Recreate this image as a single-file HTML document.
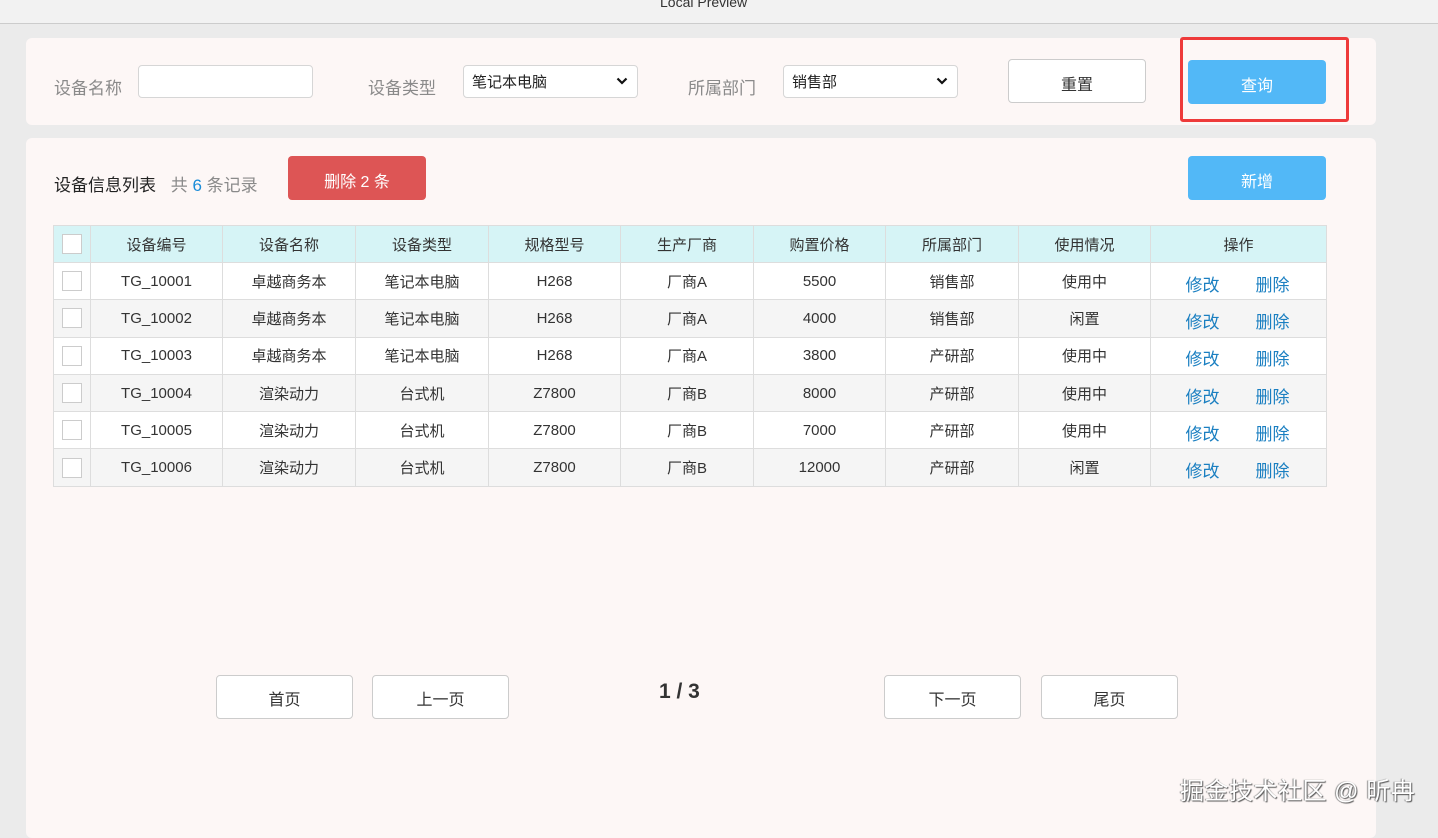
<!DOCTYPE html>
<html><head><meta charset="utf-8"><style>
*{box-sizing:border-box;margin:0;padding:0}
body{width:1438px;height:823px;overflow:hidden;background:#ebebeb;font-family:"Liberation Sans","Noto Sans CJK SC",sans-serif;position:relative;color:#333}
.top{position:absolute;left:0;top:0;width:1438px;height:24px;background:#f2f2f2;border-bottom:1px solid #ccc}
.top span{position:absolute;left:660px;top:-6px;font-size:14px;color:#333}
.card{position:absolute;left:26px;background:#fdf7f6;border-radius:6px;width:1350px}
.lbl{position:absolute;font-size:17px;color:#8a8a8a}
.inp{position:absolute;height:33px;background:#fff;border:1px solid #d6d6d6;border-radius:4px;font-size:15px;color:#222;padding:5px 8px}
.inp svg{position:absolute;right:9px;top:11px}
.btn{position:absolute;border-radius:4px;display:flex;align-items:center;justify-content:center;font-size:16px;padding-top:3px}
table{position:absolute;left:53px;top:225px;border-collapse:collapse;font-size:15px}
td,th{border:1px solid #ddd;height:37.3px;text-align:center;font-weight:normal;color:#333}
th{background:#d6f4f6;height:37px}
tr.g td{background:#f5f5f5}
tr.w td{background:#fff}
.cb{display:inline-block;width:20px;height:20px;border:1px solid #ccc;background:#fff;vertical-align:middle}
a{color:#1a7fc1;text-decoration:none;font-size:17px;margin:0 19px 0 17px;position:relative;top:2px}
.pg{position:absolute;top:675px;width:137px;height:44px;background:#fff;border:1px solid #ccc;border-radius:4px;display:flex;align-items:center;justify-content:center;padding-top:2px;font-size:16px}
</style></head><body>
<div class="top"><span>Local Preview</span></div>
<div class="card" style="top:38px;height:87px"></div>
<div class="lbl" style="left:54px;top:74px">设备名称</div>
<div class="inp" style="left:138px;top:65px;width:175px"></div>
<div class="lbl" style="left:368px;top:74px">设备类型</div>
<div class="inp" style="left:463px;top:65px;width:175px">笔记本电脑<svg width="12" height="8" viewBox="0 0 12 8"><path d="M1.5 1.5L6 6L10.5 1.5" fill="none" stroke="#111" stroke-width="2.2"/></svg></div>
<div class="lbl" style="left:688px;top:74px">所属部门</div>
<div class="inp" style="left:783px;top:65px;width:175px">销售部<svg width="12" height="8" viewBox="0 0 12 8"><path d="M1.5 1.5L6 6L10.5 1.5" fill="none" stroke="#111" stroke-width="2.2"/></svg></div>
<div class="btn" style="left:1008px;top:59px;width:138px;height:44px;background:#fff;border:1px solid #ccc">重置</div>
<div class="btn" style="left:1188px;top:60px;width:138px;height:44px;background:#52b8f7;color:#fff">查询</div>
<div style="position:absolute;left:1180px;top:37px;width:169px;height:85px;border:3px solid #ee3a3a;border-radius:3px"></div>
<div class="card" style="top:138px;height:700px"></div>
<div style="position:absolute;left:54px;top:171px;font-size:17px;color:#222">设备信息列表 <span style="color:#8a8a8a;margin-left:10px">共 <span style="color:#1a8cd8">6</span> 条记录</span></div>
<div class="btn" style="left:288px;top:156px;width:138px;height:44px;background:#dd5555;color:#fff">删除 2 条</div>
<div class="btn" style="left:1188px;top:156px;width:138px;height:44px;background:#52b8f7;color:#fff">新增</div>
<table>
<tr><th style="width:37px"><span class="cb"></span></th><th style="width:132px">设备编号</th><th style="width:133px">设备名称</th><th style="width:133px">设备类型</th><th style="width:132px">规格型号</th><th style="width:133px">生产厂商</th><th style="width:132px">购置价格</th><th style="width:133px">所属部门</th><th style="width:132px">使用情况</th><th style="width:176px">操作</th></tr>
<tr class="w"><td><span class="cb"></span></td><td>TG_10001</td><td>卓越商务本</td><td>笔记本电脑</td><td>H268</td><td>厂商A</td><td>5500</td><td>销售部</td><td>使用中</td><td><a>修改</a><a>删除</a></td></tr>
<tr class="g"><td><span class="cb"></span></td><td>TG_10002</td><td>卓越商务本</td><td>笔记本电脑</td><td>H268</td><td>厂商A</td><td>4000</td><td>销售部</td><td>闲置</td><td><a>修改</a><a>删除</a></td></tr>
<tr class="w"><td><span class="cb"></span></td><td>TG_10003</td><td>卓越商务本</td><td>笔记本电脑</td><td>H268</td><td>厂商A</td><td>3800</td><td>产研部</td><td>使用中</td><td><a>修改</a><a>删除</a></td></tr>
<tr class="g"><td><span class="cb"></span></td><td>TG_10004</td><td>渲染动力</td><td>台式机</td><td>Z7800</td><td>厂商B</td><td>8000</td><td>产研部</td><td>使用中</td><td><a>修改</a><a>删除</a></td></tr>
<tr class="w"><td><span class="cb"></span></td><td>TG_10005</td><td>渲染动力</td><td>台式机</td><td>Z7800</td><td>厂商B</td><td>7000</td><td>产研部</td><td>使用中</td><td><a>修改</a><a>删除</a></td></tr>
<tr class="g"><td><span class="cb"></span></td><td>TG_10006</td><td>渲染动力</td><td>台式机</td><td>Z7800</td><td>厂商B</td><td>12000</td><td>产研部</td><td>闲置</td><td><a>修改</a><a>删除</a></td></tr>
</table>
<div class="pg" style="left:216px">首页</div>
<div class="pg" style="left:372px">上一页</div>
<div style="position:absolute;left:659px;top:680px;font-size:21px;font-weight:bold;color:#333">1 / 3</div>
<div class="pg" style="left:884px">下一页</div>
<div class="pg" style="left:1041px">尾页</div>
<div style="position:absolute;left:1180px;top:771px;font-size:24px;letter-spacing:0.5px;color:#fff;text-shadow:1px 1px 1px #555,-1px 0 1px #888">掘金技术社区 @ 昕冉</div>
</body></html>
